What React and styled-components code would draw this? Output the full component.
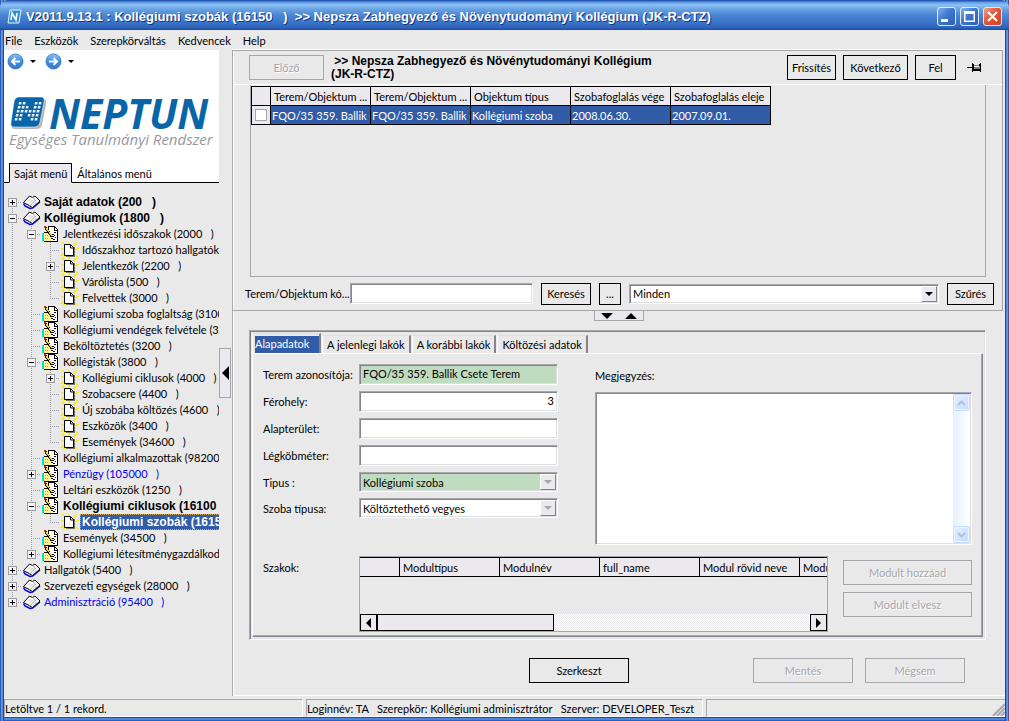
import React, { useState } from 'react'
import styled, { createGlobalStyle, css } from 'styled-components'

const GlobalStyle = createGlobalStyle`
  * {
    box-sizing: border-box;
  }
  body {
    margin: 0;
    background: #e9e9e9;
    font-family: Lato, 'Liberation Sans', sans-serif;
    font-size: 11px;
    line-height: 13px;
    color: #000;
  }
  button, input, select, textarea {
    font: inherit;
    color: inherit;
    margin: 0;
  }
`

const raised = css`
  border: 1px solid;
  border-color: #fff #85848c #85848c #fff;
`
const sunken = css`
  border: 1px solid;
  border-color: #a7a6aa #fff #fff #a7a6aa;
  box-shadow: inset 1px 1px #85848c, inset -1px -1px #dcdfe4;
`

const WindowDiv = styled.div`
  min-height: 100vh;
  display: flex;
  flex-direction: column;
  padding: 0 4px 4px;
  background: linear-gradient(90deg, #2a5ab4 0, #2a5ab4 1px, #6f9fe6 1px, #4a7fd2 3px, #1f4aa0 3px, #1f4aa0 4px, transparent 4px),
    linear-gradient(270deg, #2a5ab4 0, #2a5ab4 1px, #6f9fe6 1px, #4a7fd2 3px, #1f4aa0 3px, #1f4aa0 4px, transparent 4px),
    linear-gradient(0deg, #2459c0 0, #2f66cc 1px, #6f9fe6 2px, #3d72cc 3px, #1f4aa0 3px, #1f4aa0 4px, #e9e9e9 4px);
`
const TitleBar = styled.header`
  height: 30px;
  margin: 0 -4px;
  padding: 3px 7px 0;
  display: flex;
  align-items: center;
  gap: 4px;
  border-radius: 7px 7px 0 0;
  background: linear-gradient(#2556b4 0, #2556b4 1px, #5d99e4 2px, #8bc1f2 5px, #6ba4e4 9px, #4a86d4 15px, #3b75c9 22px, #2d62bb 28px, #1c4698 30px);
`
const TitleText = styled.h1`
  flex: 1;
  min-width: 0;
  margin: 0;
  font: bold 13px/16px 'Liberation Sans', Arial, sans-serif;
  color: #fff;
  text-shadow: 1px 1px #16357e;
  white-space: pre;
  overflow: hidden;
`
const CaptionButton = styled.button`
  width: 19px;
  height: 19px;
  padding: 0;
  border: 1px solid #dfeaf9;
  border-radius: 3px;
  background: ${props => props.$close
    ? 'linear-gradient(135deg, #f0a08a, #e0573a 45%, #d2401f)'
    : 'linear-gradient(135deg, #86b0ea, #3f78d0 45%, #2a5fb9)'};
  svg {
    display: block;
  }
`
const CaptionButtons = styled.div`
  display: flex;
  gap: 4px;
`
const MenuBar = styled.nav`
  height: 20px;
  display: flex;
  align-items: center;
  gap: 12px;
  padding-left: 1px;
`
const MenuButton = styled.button`
  padding: 0;
  border: 0;
  background: none;
`
const BodyDiv = styled.div`
  flex: 1;
  display: flex;
`

const Sidebar = styled.aside`
  width: 215px;
  flex: none;
  overflow: hidden;
`
const BrandDiv = styled.div`
  height: 113px;
  background: #fff;
  padding: 3px 3px 0;
`
const HistoryDiv = styled.div`
  display: flex;
  gap: 4px;
`
const HistoryButton = styled.button`
  display: flex;
  align-items: center;
  gap: 6px;
  width: 34px;
  padding: 0;
  border: 0;
  background: none;
`
const LogoDiv = styled.div`
  display: flex;
  align-items: center;
  gap: 2px;
  height: 34px;
  margin: 26px 0 0 3px;
`
const LogoName = styled.div`
  font: italic bold 41px/34px 'Open Sans', 'Noto Sans', sans-serif;
  color: #0865a8;
`
const LogoSlogan = styled.div`
  padding-left: 2px;
  font: italic 15px/18px 'Open Sans', 'Noto Sans', sans-serif;
  color: #97999c;
  white-space: nowrap;
`
const MenuTabs = styled.div`
  display: flex;
  height: 20px;
  padding-left: 5px;
  background: linear-gradient(#000, #000) bottom / 100% 1px no-repeat #fff;
`
const MenuTab = styled.button`
  padding: 0 4px;
  border: 1px solid ${props => props.$active ? '#000' : 'transparent'};
  border-bottom-color: ${props => props.$active ? '#ebe9ed' : '#000'};
  background: ${props => props.$active ? '#ebe9ed' : 'transparent'};
`

const Tree = styled.ul`
  list-style: none;
  margin: 0;
  padding: 11px 0 0;
  background: linear-gradient(#ebe9ed, #e9e9e9 11px);
`
const TreeRow = styled.li`
  display: flex;
  height: 16px;
  white-space: pre;
`
const vDots = 'repeating-linear-gradient(#a0a0a4 0 1px, transparent 1px 2px)'
const hDots = 'repeating-linear-gradient(90deg, #a0a0a4 0 1px, transparent 1px 2px)'
const Rail = styled.span`
  flex: none;
  width: 19px;
  background: ${props => props.$on ? `${vDots} 8px 0 / 1px 100% no-repeat` : 'none'};
`
const Joint = styled(Rail)`
  display: flex;
  align-items: center;
  padding-left: 4px;
  background:
    ${vDots} 8px ${props => props.$start ? '8px' : '0'} / 1px ${props => props.$end ? '8px' : '100%'} no-repeat,
    ${hDots} 8px 8px / 10px 1px no-repeat;
`
const Toggle = styled.button`
  width: 9px;
  height: 9px;
  padding: 0;
  border: 1px solid #9c9ca0;
  background:
    linear-gradient(#000, #000) center / 5px 1px no-repeat,
    linear-gradient(#000, #000) center / 1px ${props => props.$open ? '0' : '5px'} no-repeat,
    #f3f2f4;
`
const IconSpan = styled.span`
  flex: none;
  width: 19px;
  svg {
    display: block;
  }
`
const TreeLabel = styled.a`
  padding: 0 2px;
  line-height: 16px;
  color: ${props => props.$link ? '#0000f0' : '#000'};
  text-decoration: none;
  ${props => props.$bold && css`
    font: bold 12px/16px 'Liberation Sans', Arial, sans-serif;
  `}
  ${props => props.$selected && css`
    color: #fff;
    background: #315ca7;
    outline: 1px dotted #cba258;
    outline-offset: -1px;
  `}
`

const Gutter = styled.div`
  flex: none;
  width: 13px;
  display: flex;
  align-items: center;
`
const CollapseButton = styled.button`
  width: 12px;
  height: 50px;
  padding: 0;
  border: 1px solid #a7a6aa;
  background: #ebe9ed;
  display: flex;
  align-items: center;
  justify-content: center;
`
const Main = styled.main`
  flex: 1;
  min-width: 0;
  display: flex;
  flex-direction: column;
  border-left: 1px solid #a7a6aa;
  box-shadow: inset 1px 0 #fff;
`
const ListPane = styled.section`
  flex: 1;
  display: flex;
  flex-direction: column;
  margin-right: 2px;
  border: 1px solid #a7a6aa;
  border-width: 1px 1px 1px 0;
  box-shadow: 0 -1px #fff;
`
const Toolbar = styled.div`
  height: 34px;
  flex: none;
  display: flex;
  align-items: center;
  gap: 7px;
  padding: 0 20px 0 16px;
  border-bottom: 1px solid #fff;
`
const ToolbarTitle = styled.h2`
  flex: 1;
  margin: 0;
  font: bold 12px/13px 'Liberation Sans', Arial, sans-serif;
  white-space: pre;
`
const PushButton = styled.button`
  flex: none;
  width: ${props => props.$width}px;
  height: ${props => props.$small ? 22 : 25}px;
  padding: 0;
  border: 1px solid #000;
  background: #e9e9e9;
  white-space: nowrap;
  &:disabled {
    border-color: #a7a6aa;
    color: #a7a6aa;
    text-shadow: 1px 1px #fff;
  }
`
const PinButton = styled.button`
  padding: 0;
  margin-left: 4px;
  border: 0;
  background: none;
  svg {
    display: block;
  }
`
const ResultsDiv = styled.div`
  flex: 1;
  min-height: 100px;
  margin: 0 16px 0 17px;
  padding-top: 1px;
  border: 1px solid #a7a6aa;
  border-top: 0;
`
const DataTable = styled.table`
  table-layout: fixed;
  width: ${props => props.$width}px;
  border-collapse: collapse;
  th, td {
    height: 19px;
    padding: 0 1px;
    border: 1px solid #000;
    font-weight: normal;
    text-align: left;
    white-space: nowrap;
    overflow: hidden;
  }
  th {
    padding: 0 0 0 3px;
    background: #ebe9ed;
  }
  td {
    background: #315ca7;
    color: #fff;
  }
  td:first-child {
    background: #ebe9ed;
  }
`
const RowCheck = styled.input`
  appearance: none;
  display: block;
  width: 12px;
  height: 12px;
  margin: 0 0 0 2px;
  border: 1px solid #a7a6aa;
  background: #fff;
`
const SearchRow = styled.div`
  flex: none;
  display: flex;
  align-items: center;
  gap: 8px;
  height: 33px;
  padding: 0 8px 0 12px;
`
const SearchLabel = styled.label`
  flex: none;
  width: 105px;
  white-space: nowrap;
`
const TextInput = styled.input`
  ${sunken}
  height: 21px;
  min-width: 0;
  width: 100%;
  padding: 0 3px 2px;
  border-radius: 0;
  background: ${props => props.$locked ? '#c0dcc0' : '#fff'};
  text-align: ${props => props.$number ? 'right' : 'left'};
  outline: 0;
`
const SearchInput = styled(TextInput)`
  width: 183px;
  margin-left: -8px;
`
const SelectBox = styled.div`
  position: relative;
  flex: 1;
  min-width: 0;
  select {
    ${sunken}
    appearance: none;
    display: block;
    width: 100%;
    height: 20px;
    padding: 0 20px 0 3px;
    border-radius: 0;
    opacity: 1;
    color: #000;
    background: ${props => props.$locked ? '#c0dcc0' : '#fff'};
  }
`
const SelectArrow = styled.span`
  ${raised}
  position: absolute;
  top: 2px;
  right: 2px;
  bottom: 2px;
  width: 16px;
  display: flex;
  align-items: center;
  justify-content: center;
  background: #ebe9ed;
  pointer-events: none;
`
const SplitterDiv = styled.div`
  flex: none;
  height: 19px;
  display: flex;
  justify-content: center;
  align-items: flex-start;
`
const SplitterHandle = styled.div`
  display: flex;
  align-items: center;
  justify-content: center;
  gap: 12px;
  width: 50px;
  height: 10px;
  border: 1px solid #a7a6aa;
  border-top: 0;
  background: #ebe9ed;
`

const DetailBox = styled.section`
  ${sunken}
  flex: none;
  margin: 0 19px 0 16px;
  padding: 2px;
`
const TabList = styled.div`
  display: flex;
  align-items: flex-end;
  gap: 1px;
  height: 20px;
`
const Tab = styled.button`
  height: 18px;
  padding: 0 4px;
  border: 1px solid;
  border-color: #dcdfe4 #85848c transparent #fff;
  border-right-width: 2px;
  border-bottom: 0;
  background: #e9e9e9;
  ${props => props.$active && css`
    height: 20px;
    padding: 0 0 0 2px;
    span {
      display: block;
      height: 17px;
      width: 64px;
      margin-top: 2px;
      line-height: 15px;
      text-align: left;
      background: #315ca7;
      color: #fff;
    }
  `}
`
const TabPage = styled.div`
  display: flex;
  flex-direction: column;
  gap: 11px;
  padding: 10px 10px 4px;
  border: 1px solid;
  border-color: #fff #85848c #85848c #fff;
  box-shadow: inset -1px -1px #a7a6aa;
`
const FormColumns = styled.div`
  display: flex;
  gap: 37px;
`
const FieldList = styled.div`
  display: flex;
  flex-direction: column;
  gap: 6px;
`
const FieldRow = styled.div`
  display: flex;
  align-items: center;
`
const FieldLabel = styled.label`
  flex: none;
  width: 96px;
  white-space: nowrap;
`
const FieldSlot = styled.div`
  width: 199px;
  display: flex;
`
const NoteColumn = styled.div`
  flex: 1;
  display: flex;
  flex-direction: column;
  label {
    height: 28px;
    padding-top: 5px;
  }
`
const NoteBox = styled.div`
  ${sunken}
  display: flex;
  height: 153px;
  padding: 1px;
  background: #fff;
  textarea {
    flex: 1;
    min-width: 0;
    border: 0;
    padding: 2px;
    background: none;
    resize: none;
    outline: 0;
  }
`
const SoftScroll = styled.div`
  width: 17px;
  display: flex;
  flex-direction: column;
  justify-content: space-between;
  background: linear-gradient(90deg, #e4efff, #f6faff 60%, #fff);
  button {
    height: 17px;
    padding: 0;
    border: 1px solid #c2dbff;
    border-radius: 2px;
    background: linear-gradient(135deg, #e3efff, #c6dcfc);
    box-shadow: inset 0 0 0 1px #eef5ff;
    display: flex;
    align-items: center;
    justify-content: center;
  }
`
const ModuleRow = styled.div`
  display: flex;
`
const ModuleLabel = styled(FieldLabel).attrs({ as: 'span' })`
  padding-top: 5px;
`
const ModuleBox = styled.div`
  flex: 1;
  min-width: 0;
  height: 76px;
  display: flex;
  flex-direction: column;
  justify-content: space-between;
  overflow: hidden;
  border: 1px solid #a7a6aa;
`
const ModuleTable = styled(DataTable)`
  margin-left: -1px;
`
const ScrollTrack = styled.div`
  display: flex;
  height: 17px;
  background: repeating-conic-gradient(#fff 0 25%, #e9e9ec 0 50%) 0 0 / 2px 2px;
`
const ScrollButton = styled.button`
  width: 17px;
  padding: 0;
  border: 1px solid #000;
  background: #ebe9ed;
  display: flex;
  align-items: center;
  justify-content: center;
`
const ScrollThumb = styled.div`
  width: 177px;
  margin-right: auto;
  border: 1px solid #000;
  background: #ebe9ed;
`
const ModuleButtons = styled.div`
  display: flex;
  flex-direction: column;
  gap: 7px;
  padding: 4px 0 0 15px;
`
const ActionRow = styled.div`
  display: flex;
  justify-content: flex-end;
  gap: 12px;
  padding: 18px 40px 12px 0;
  border-bottom: 1px solid #fff;
`
const EditButton = styled(PushButton)`
  margin-right: 112px;
`
const StatusBar = styled.footer`
  flex: none;
  display: flex;
  gap: 3px;
  height: 21px;
  padding-top: 3px;
`
const StatusPane = styled.div`
  flex: ${props => props.$width ? `0 0 ${props.$width}px` : '1'};
  padding: 1px 0 0;
  line-height: 15px;
  border: 1px solid;
  border-color: #a7a6aa #fff #fff #a7a6aa;
  white-space: pre;
  overflow: hidden;
`
const GripPane = styled(StatusPane)`
  display: flex;
  justify-content: flex-end;
  align-items: flex-end;
  border-right: 0;
`

function Arrow({ dir, size = 5, color = '#000' }) {
  const d = {
    down: 'M0 0h10l-5 5z',
    up: 'M0 5h10l-5 -5z',
    left: 'M5 0v10l-5 -5z',
    right: 'M0 0v10l5 -5z',
  }[dir]
  const flat = dir === 'down' || dir === 'up'
  return (
    <svg
      width={flat ? size * 2 : size}
      height={flat ? size : size * 2}
      viewBox={flat ? '0 0 10 5' : '0 0 5 10'}
      aria-hidden="true"
    >
      <path d={d} fill={color} />
    </svg>
  )
}

function BookIcon() {
  return (
    <svg width="18" height="16" viewBox="0 0 18 16">
      <path d="M.5 9.500L2 12l5 2.500 2.500-.5 7.500-6" fill="none" stroke="#0000e8" strokeWidth="1.500" />
      <path d="M.5 8.500L6.500 2l3 1.500L12 2l5 5L9.500 13.500 7 12z" fill="#fff" stroke="#000" />
      <path d="M9.500 3.500L12.500 6l-6 6" fill="none" stroke="#8a8a8a" strokeWidth=".8" />
      <path d="M4 8.500l4-4M6 9.500l4-4M10 11.500l4-4" fill="none" stroke="#999" strokeDasharray="1 1" />
    </svg>
  )
}

function NotesIcon() {
  return (
    <svg width="18" height="16" viewBox="0 0 18 16" shapeRendering="crispEdges">
      <path d="M6.500 .5h6l3 3v12h-9z" fill="#fff" stroke="#000" />
      <path d="M12.500 1v3h3" fill="none" stroke="#000" />
      <path d="M12 6.500h2M12 9.500h1M11 13.500h2M13 11.500h1" stroke="#000" />
      <path d="M2 7h6l3 1v3l-2 1v3H2z" fill="#fbf48c" />
      <path d="M2 6.500h4M10 8.500h2M9 10.500h3M9 12.500h2M2 15.500h7" stroke="#000" />
      <path d="M3 9.500h3M3 12.500h3" stroke="#c8b400" strokeDasharray="1 1" />
      <path d="M0 7h2v8H0z" fill="#00dede" />
      <path d="M3.500 2l6 8" stroke="#000" strokeWidth="2.500" />
      <path d="M4 2l6 8" stroke="#f0d000" />
      <path d="M2 0h2v2H2z" fill="#d03020" />
    </svg>
  )
}

function PageIcon() {
  return (
    <svg width="18" height="16" viewBox="0 0 18 16">
      <path d="M1 0l4 4M8 0v2M16 0l-4 4M18 6l-4 2M0 7h4M0 14l4-3M17 15l-4-3M2 16l2-2M9 16v-2" stroke="#ffee00" strokeWidth="1.500" />
      <path d="M5 5h9v10H5z" fill="#77776a" />
      <path d="M3.500 2.500h6l3 3v8h-9z" fill="#fff" stroke="#000" />
      <path d="M9.500 3v3h3" fill="none" stroke="#000" />
    </svg>
  )
}

function HistoryIcon({ forward }) {
  return (
    <svg width="17" height="17" viewBox="0 0 17 17">
      <defs>
        <linearGradient id={forward ? 'fwd' : 'back'} x1="0" y1="0" x2="0" y2="1">
          <stop offset="0" stopColor="#8fc2f5" />
          <stop offset=".5" stopColor="#3f8de0" />
          <stop offset="1" stopColor="#2f78d0" />
        </linearGradient>
      </defs>
      <circle cx="8.500" cy="8.500" r="7.500" fill={`url(#${forward ? 'fwd' : 'back'})`} stroke="#3f7fc8" />
      <path
        d={forward ? 'M4 8.500h8M8.500 5l3.500 3.500L8.500 12' : 'M13 8.500H5M8.500 5L5 8.500 8.500 12'}
        fill="none"
        stroke="#fff"
        strokeWidth="2"
      />
    </svg>
  )
}

// columns that are lit in each row of the dotted N
const markDots = [
  [0, 1, 4, 5],
  [0, 1, 2, 4, 5],
  [0, 1, 2, 3, 4, 5],
  [0, 1, 3, 4, 5],
  [0, 1, 4, 5],
]

function BrandMark() {
  return (
    <svg width="37" height="34" viewBox="0 0 37 34">
      <path d="M10 3h22q5 0 4 5l-4 21q-1 4-6 4H5q-4 0-3-4l4-22q1-4 4-4z" fill="#b4b6ba" />
      <path d="M9 1h22q4 0 3 5l-4 20q-1 5-6 5H4q-4 0-3-5L4 6q1-5 5-5z" fill="#0865a8" stroke="#fff" strokeWidth=".5" />
      {markDots.map((cols, y) => cols.map(x => (
        <path key={`${x}-${y}`} d={`M${9 - y + x * 4} ${6 + y * 4}h2.600l-.4 2.600h-2.600z`} fill="#e8f3fb" />
      )))}
    </svg>
  )
}

function AppIcon() {
  return (
    <svg width="15" height="15" viewBox="0 0 15 15">
      <path d="M3 1h11l-2 13H1z" fill="#2f8fd0" stroke="#e6f3fc" />
      <path d="M4 11l1-7 4 7 1-7" fill="none" stroke="#fff" strokeWidth="1.600" />
    </svg>
  )
}

function PinIcon() {
  return (
    <svg width="15" height="11" viewBox="0 0 15 11" shapeRendering="crispEdges">
      <path d="M0 5.500h5" stroke="#000" />
      <path d="M5.500 1v9M13.500 1v9M6.500 2v7" stroke="#000" />
      <path d="M7 3h6v5H7z" fill="#808080" />
      <path d="M7 4.500h5" stroke="#fff" />
      <path d="M12.500 2v2M6 8h7M12.500 7v2" stroke="#000" strokeWidth="2" />
    </svg>
  )
}

const tree = [
  { level: 0, kind: 'book', text: 'Saját adatok (200   )', bold: true, toggle: 'closed', start: true },
  { level: 0, kind: 'book', text: 'Kollégiumok (1800   )', bold: true, toggle: 'open' },
  { level: 1, kind: 'notes', text: 'Jelentkezési időszakok (2000   )', toggle: 'open' },
  { level: 2, kind: 'page', text: 'Időszakhoz tartozó hallgatók' },
  { level: 2, kind: 'page', text: 'Jelentkezők (2200   )', toggle: 'closed' },
  { level: 2, kind: 'page', text: 'Várólista (500   )' },
  { level: 2, kind: 'page', text: 'Felvettek (3000   )', end: true },
  { level: 1, kind: 'notes', text: 'Kollégiumi szoba foglaltság (3100' },
  { level: 1, kind: 'notes', text: 'Kollégiumi vendégek felvétele (31' },
  { level: 1, kind: 'notes', text: 'Beköltöztetés (3200   )' },
  { level: 1, kind: 'notes', text: 'Kollégisták (3800   )', toggle: 'open' },
  { level: 2, kind: 'page', text: 'Kollégiumi ciklusok (4000   )', toggle: 'closed' },
  { level: 2, kind: 'page', text: 'Szobacsere (4400   )' },
  { level: 2, kind: 'page', text: 'Új szobába költözés (4600   )' },
  { level: 2, kind: 'page', text: 'Eszközök (3400   )' },
  { level: 2, kind: 'page', text: 'Események (34600   )', end: true },
  { level: 1, kind: 'notes', text: 'Kollégiumi alkalmazottak (98200' },
  { level: 1, kind: 'notes', text: 'Pénzügy (105000   )', link: true, toggle: 'closed' },
  { level: 1, kind: 'notes', text: 'Leltári eszközök (1250   )' },
  { level: 1, kind: 'notes', text: 'Kollégiumi ciklusok (16100', bold: true, toggle: 'open' },
  { level: 2, kind: 'page', text: 'Kollégiumi szobák (1615', bold: true, selected: true, end: true },
  { level: 1, kind: 'notes', text: 'Események (34500   )' },
  { level: 1, kind: 'notes', text: 'Kollégiumi létesítménygazdálkoda', toggle: 'closed', end: true },
  { level: 0, kind: 'book', text: 'Hallgatók (5400   )', toggle: 'closed' },
  { level: 0, kind: 'book', text: 'Szervezeti egységek (28000   )', toggle: 'closed' },
  { level: 0, kind: 'book', text: 'Adminisztráció (95400   )', link: true, toggle: 'closed', end: true },
]

const treeIcons = { book: BookIcon, notes: NotesIcon, page: PageIcon }

function TreeItem({ item }) {
  const Icon = treeIcons[item.kind]
  return (
    <TreeRow>
      {Array.from({ length: item.level }, (_, i) => <Rail key={i} $on />)}
      <Joint $start={item.start} $end={item.end}>
        {item.toggle && <Toggle $open={item.toggle === 'open'} aria-label={item.text} />}
      </Joint>
      <IconSpan><Icon /></IconSpan>
      <TreeLabel href="#" $bold={item.bold} $link={item.link} $selected={item.selected}>
        {item.text}
      </TreeLabel>
    </TreeRow>
  )
}

function Select({ id, value, label, locked, disabled }) {
  return (
    <SelectBox $locked={locked}>
      <select id={id} aria-label={label} disabled={disabled} defaultValue={value}>
        <option>{value}</option>
      </select>
      <SelectArrow>
        <Arrow dir="down" size={4} color={disabled ? '#a7a6aa' : '#000'} />
      </SelectArrow>
    </SelectBox>
  )
}

function Field({ id, label, children }) {
  return (
    <FieldRow>
      <FieldLabel htmlFor={id}>{label}</FieldLabel>
      <FieldSlot>{children}</FieldSlot>
    </FieldRow>
  )
}

function SideMenu() {
  return (
    <Sidebar>
      <BrandDiv>
        <HistoryDiv>
          <HistoryButton aria-label="Vissza"><HistoryIcon /><Arrow dir="down" size={3} /></HistoryButton>
          <HistoryButton aria-label="Előre"><HistoryIcon forward /><Arrow dir="down" size={3} /></HistoryButton>
        </HistoryDiv>
        <LogoDiv>
          <BrandMark />
          <LogoName>NEPTUN</LogoName>
        </LogoDiv>
        <LogoSlogan>Egységes Tanulmányi Rendszer</LogoSlogan>
      </BrandDiv>
      <MenuTabs>
        <MenuTab $active>Saját menü</MenuTab>
        <MenuTab>Általános menü</MenuTab>
      </MenuTabs>
      <Tree>
        {tree.map(item => <TreeItem key={item.text} item={item} />)}
      </Tree>
    </Sidebar>
  )
}

const tabs = ['Alapadatok', 'A jelenlegi lakók', 'A korábbi lakók', 'Költözési adatok']

function Details() {
  const [ tab, setTab ] = useState(tabs[0])

  return (
    <DetailBox>
      <TabList>
        {tabs.map(name => (
          <Tab key={name} $active={name === tab} onClick={() => setTab(name)}><span>{name}</span></Tab>
        ))}
      </TabList>
      <TabPage>
        <FormColumns>
          <FieldList>
            <Field id="room" label="Terem azonosítója:">
              <TextInput id="room" $locked readOnly defaultValue="FQO/35 359. Ballik Csete Terem" />
            </Field>
            <Field id="beds" label="Férohely:">
              <TextInput id="beds" $number readOnly defaultValue="3" />
            </Field>
            <Field id="area" label="Alapterület:">
              <TextInput id="area" readOnly />
            </Field>
            <Field id="volume" label="Légköbméter:">
              <TextInput id="volume" readOnly />
            </Field>
            <Field id="type" label="Tipus :">
              <Select id="type" value="Kollégiumi szoba" locked disabled />
            </Field>
            <Field id="roomType" label="Szoba típusa:">
              <Select id="roomType" value="Költöztethető vegyes" disabled />
            </Field>
          </FieldList>
          <NoteColumn>
            <label htmlFor="note">Megjegyzés:</label>
            <NoteBox>
              <textarea id="note" readOnly />
              <SoftScroll>
                <button aria-label="Fel">
                  <svg width="9" height="6"><path d="M1 5l3.500-3.500L8 5" fill="none" stroke="#a9c3ea" strokeWidth="2" /></svg>
                </button>
                <button aria-label="Le">
                  <svg width="9" height="6"><path d="M1 1l3.500 3.500L8 1" fill="none" stroke="#a9c3ea" strokeWidth="2" /></svg>
                </button>
              </SoftScroll>
            </NoteBox>
          </NoteColumn>
        </FormColumns>
        <ModuleRow>
          <ModuleLabel>Szakok:</ModuleLabel>
          <ModuleBox>
            <ModuleTable $width={540}>
              <colgroup>
                <col width="40" />
                <col span="5" width="100" />
              </colgroup>
              <thead>
                <tr>
                  <th />
                  <th>Modultípus</th>
                  <th>Modulnév</th>
                  <th>full_name</th>
                  <th>Modul rövid neve</th>
                  <th>Modu</th>
                </tr>
              </thead>
            </ModuleTable>
            <ScrollTrack>
              <ScrollButton aria-label="Balra"><Arrow dir="left" size={5} /></ScrollButton>
              <ScrollThumb />
              <ScrollButton aria-label="Jobbra"><Arrow dir="right" size={5} /></ScrollButton>
            </ScrollTrack>
          </ModuleBox>
          <ModuleButtons>
            <PushButton $width={129} disabled>Modult hozzáad</PushButton>
            <PushButton $width={129} disabled>Modult elvesz</PushButton>
          </ModuleButtons>
        </ModuleRow>
      </TabPage>
    </DetailBox>
  )
}

function App() {
  return (
    <>
      <GlobalStyle />
      <WindowDiv>
        <TitleBar>
          <AppIcon />
          <TitleText>{'V2011.9.13.1 : Kollégiumi szobák (16150   )  >> Nepsza Zabhegyező és Növénytudományi Kollégium (JK-R-CTZ)'}</TitleText>
          <CaptionButtons>
            <CaptionButton aria-label="Kis méret">
              <svg width="17" height="17"><path d="M3 11h7v3H3z" fill="#fff" /></svg>
            </CaptionButton>
            <CaptionButton aria-label="Teljes méret">
              <svg width="17" height="17"><path d="M3 3h11v11H3zM4.500 6v6.500h8V6z" fill="#fff" fillRule="evenodd" /></svg>
            </CaptionButton>
            <CaptionButton $close aria-label="Bezárás">
              <svg width="17" height="17"><path d="M4 4l9 9M13 4l-9 9" stroke="#fff" strokeWidth="2.200" /></svg>
            </CaptionButton>
          </CaptionButtons>
        </TitleBar>
        <MenuBar>
          {['File', 'Eszközök', 'Szerepkörváltás', 'Kedvencek', 'Help'].map(name => (
            <MenuButton key={name}>{name}</MenuButton>
          ))}
        </MenuBar>
        <BodyDiv>
          <SideMenu />
          <Gutter>
            <CollapseButton aria-label="Menü elrejtése"><Arrow dir="left" size={7} /></CollapseButton>
          </Gutter>
          <Main>
            <ListPane>
              <Toolbar>
                <PushButton $width={75} disabled>Előző</PushButton>
                <ToolbarTitle>{' >> Nepsza Zabhegyező és Növénytudományi Kollégium\n(JK-R-CTZ)'}</ToolbarTitle>
                <PushButton $width={49}>Frissítés</PushButton>
                <PushButton $width={65}>Következő</PushButton>
                <PushButton $width={41}>Fel</PushButton>
                <PinButton aria-label="Rögzítés"><PinIcon /></PinButton>
              </Toolbar>
              <ResultsDiv>
                <DataTable $width={519}>
                  <colgroup>
                    <col width="19" />
                    <col span="5" width="100" />
                  </colgroup>
                  <thead>
                    <tr>
                      <th />
                      <th>Terem/Objektum ...</th>
                      <th>Terem/Objektum ...</th>
                      <th>Objektum típus</th>
                      <th>Szobafoglalás vége</th>
                      <th>Szobafoglalás eleje</th>
                    </tr>
                  </thead>
                  <tbody>
                    <tr>
                      <td><RowCheck type="checkbox" aria-label="Sor kijelölése" /></td>
                      <td>FQO/35 359. Ballik C</td>
                      <td>FQO/35 359. Ballik C</td>
                      <td>Kollégiumi szoba</td>
                      <td>2008.06.30.</td>
                      <td>2007.09.01.</td>
                    </tr>
                  </tbody>
                </DataTable>
              </ResultsDiv>
              <SearchRow>
                <SearchLabel htmlFor="search">Terem/Objektum kó...</SearchLabel>
                <SearchInput id="search" />
                <PushButton $width={50} $small>Keresés</PushButton>
                <PushButton $width={22} $small>...</PushButton>
                <Select label="Szűrő" value="Minden" />
                <PushButton $width={47} $small>Szűrés</PushButton>
              </SearchRow>
            </ListPane>
            <SplitterDiv>
              <SplitterHandle>
                <Arrow dir="down" size={6} />
                <Arrow dir="up" size={6} />
              </SplitterHandle>
            </SplitterDiv>
            <Details />
            <ActionRow>
              <EditButton $width={100}>Szerkeszt</EditButton>
              <PushButton $width={100} disabled>Mentés</PushButton>
              <PushButton $width={100} disabled>Mégsem</PushButton>
            </ActionRow>
          </Main>
        </BodyDiv>
        <StatusBar>
          <StatusPane $width={299}>Letöltve 1 / 1 rekord.</StatusPane>
          <StatusPane $width={397}>{'Loginnév: TA   Szerepkör: Kollégiumi adminisztrátor   Szerver: DEVELOPER_Teszt'}</StatusPane>
          <GripPane>
            <svg width="13" height="13" aria-hidden="true">
              <path d="M1 13L13 1M5 13l8-8M9 13l4-4" stroke="#a7a6aa" strokeWidth="2" />
            </svg>
          </GripPane>
        </StatusBar>
      </WindowDiv>
    </>
  )
}

export default App
